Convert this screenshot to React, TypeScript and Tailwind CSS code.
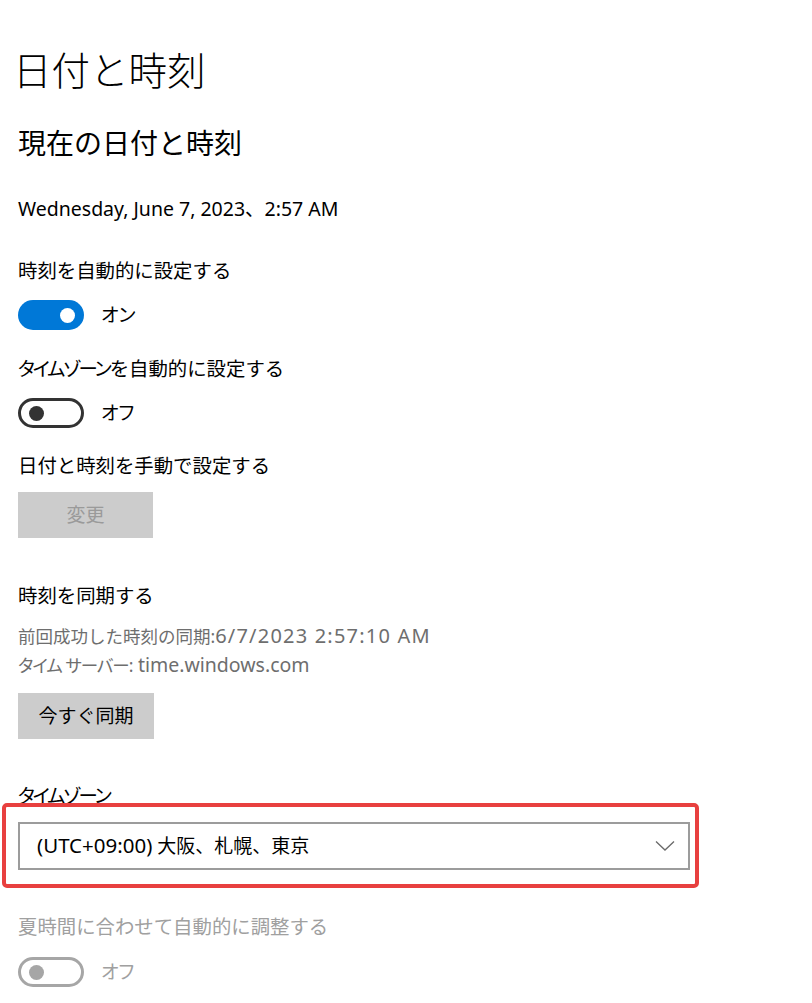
import React from 'react'

const font = { fontFamily: '"Noto Sans", "Noto Sans CJK JP", sans-serif' }

// katakana in the original UI font is proportional and tighter
const kana = "[font-feature-settings:'palt'] tracking-[-2.2px]"

function Toggle({ on, disabled, label }: { on?: boolean; disabled?: boolean; label: string }) {
  return (
    <div className="flex items-center h-[30px]">
      {on ? (
        <div className="w-[66px] h-[30px] rounded-full bg-[#0078d7] flex items-center justify-end pr-[9px]">
          <div className="w-[15px] h-[15px] rounded-full bg-white" />
        </div>
      ) : (
        <div
          className={`w-[66px] h-[30px] rounded-full border-[3px] flex items-center pl-[8px] ${
            disabled ? 'border-[#a6a6a6]' : 'border-[#333333]'
          }`}
        >
          <div className={`w-[15px] h-[15px] rounded-full ${disabled ? 'bg-[#a6a6a6]' : 'bg-[#333333]'}`} />
        </div>
      )}
      <span
        className={`ml-[17px] text-[19px] leading-[24px] [font-feature-settings:'palt'] ${
          disabled ? 'text-[#a0a0a0]' : 'text-black'
        }`}
      >
        {label}
      </span>
    </div>
  )
}

export default function App() {
  return (
    <div className="w-[812px] h-[1003px] bg-white overflow-hidden pl-[18px] pt-[50px]" style={font}>
      {/* page title */}
      <h1 className="-ml-[5px] text-[38.5px] leading-[40px] h-[40px] font-light text-black">日付と時刻</h1>

      <h2 className="mt-[37px] text-[28px] leading-[32px] h-[32px] text-black">現在の日付と時刻</h2>

      <p className="mt-[38px] text-[19.5px] leading-[24px] text-black">Wednesday, June 7, 2023、2:57 AM</p>

      <p className="mt-[38px] text-[19.4px] leading-[24px] text-black">時刻を自動的に設定する</p>
      <div className="mt-[17px]">
        <Toggle on label="オン" />
      </div>

      <p className="mt-[27px] text-[19.4px] leading-[24px] text-black">
        <span className={kana}>タイムゾーン</span>を自動的に設定する
      </p>
      <div className="mt-[17px]">
        <Toggle label="オフ" />
      </div>

      <p className="mt-[26px] text-[19.4px] leading-[24px] text-black">日付と時刻を手動で設定する</p>
      <button className="mt-[14px] w-[135px] h-[46px] bg-[#cccccc] text-[19px] text-[#9a9a9a] flex items-center justify-center">
        変更
      </button>

      <p className="mt-[46px] text-[19.4px] leading-[24px] text-black">時刻を同期する</p>
      <div className="mt-[14px] text-[17.5px] text-[#6e6e6e]">
        <p className="h-[29px] leading-[29px]">
          前回成功した時刻の同期:<span className="text-[20px] leading-none tracking-[1.2px]">6/7/2023 2:57:10 AM</span>
        </p>
        <p className="h-[29px] leading-[29px]">
          <span className="[font-feature-settings:'palt'] tracking-[-1px]">タイム サーバー</span>:{' '}
          <span className="text-[19.5px] leading-none">time.windows.com</span>
        </p>
      </div>
      <button className="mt-[13px] w-[136px] h-[46px] bg-[#cccccc] text-[19px] text-black flex items-center justify-center">
        今すぐ同期
      </button>

      <p className="mt-[45px] text-[19.4px] leading-[24px] text-black">
        <span className={kana}>タイムゾーン</span>
      </p>
      <div className="relative mt-[14px] w-[672px]">
        <div className="h-[48px] border-2 border-[#9c9c9c] bg-white flex items-center justify-between pl-[17px] pr-[13px]">
          <span className="text-[19px] leading-[24px] text-black">
            <span className="text-[20.5px] leading-none">(UTC+09:00)</span> 大阪、札幌、東京
          </span>
          <svg width="20" height="12" viewBox="0 0 20 12" fill="none">
            <polyline points="1,1.5 10,10 19,1.5" stroke="#6a6a6a" strokeWidth="1.3" />
          </svg>
        </div>
        {/* red annotation box */}
        <div className="absolute -left-[16px] -right-[9px] -top-[19px] -bottom-[18px] border-4 border-[#e8403f] rounded-[5px] pointer-events-none" />
      </div>

      <p className="mt-[45px] text-[19.4px] leading-[24px] text-[#a0a0a0]">夏時間に合わせて自動的に調整する</p>
      <div className="mt-[18px]">
        <Toggle disabled label="オフ" />
      </div>
    </div>
  )
}
